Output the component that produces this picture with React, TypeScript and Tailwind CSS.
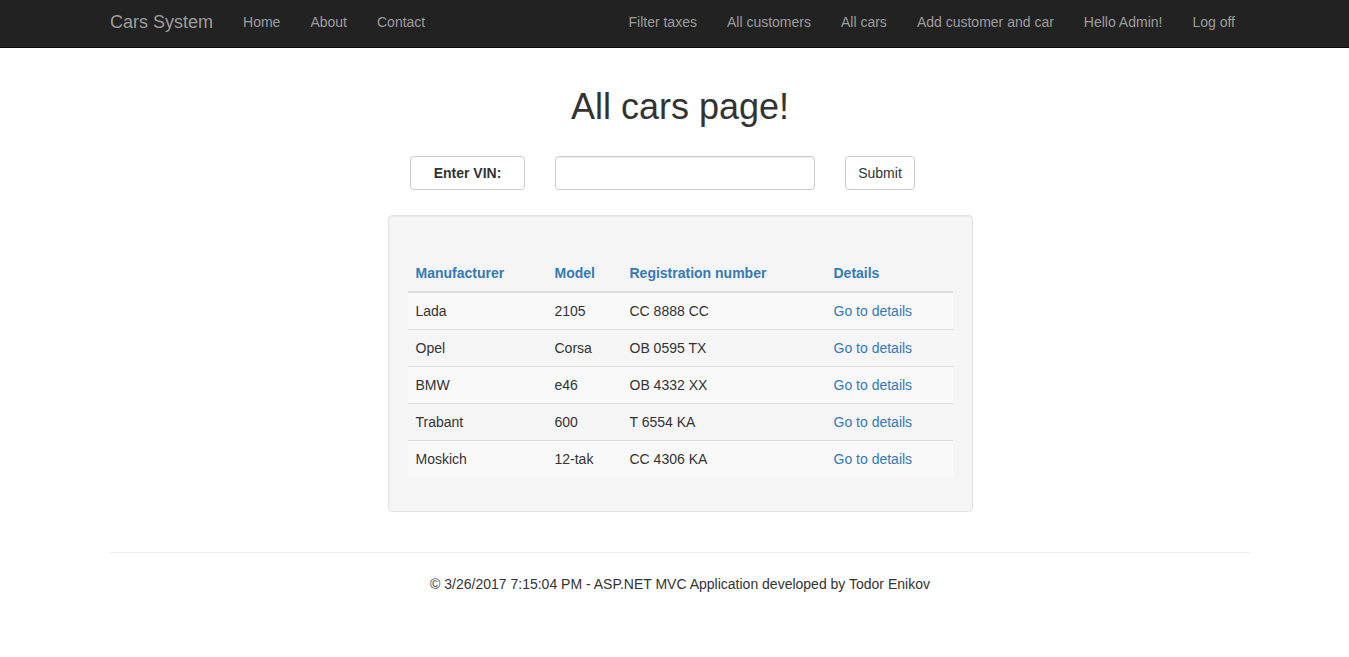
import React from "react";

const rows = [
  ["Lada", "2105", "CC 8888 CC"],
  ["Opel", "Corsa", "OB 0595 TX"],
  ["BMW", "e46", "OB 4332 XX"],
  ["Trabant", "600", "T 6554 KA"],
  ["Moskich", "12-tak", "CC 4306 KA"],
];

export default function App() {
  return (
    <div
      className="min-h-[657px] bg-white text-[14px] leading-[20px] text-[#333]"
      style={{ fontFamily: '"Liberation Sans", Arial, Helvetica, sans-serif' }}
    >
      <nav className="h-[48px] bg-[#222] border-b border-[#080808] pl-[11px]">
        <div className="w-[1140px] mx-auto h-[47px] pb-[4px] flex items-center justify-between text-[#9d9d9d]">
          <div className="flex items-center">
            <span className="text-[18px] leading-[20px] pr-[15px]">Cars System</span>
            <a className="px-[15px]">Home</a>
            <a className="px-[15px]">About</a>
            <a className="px-[15px]">Contact</a>
          </div>
          <div className="flex items-center">
            <a className="px-[15px]">Filter taxes</a>
            <a className="px-[15px]">All customers</a>
            <a className="px-[15px]">All cars</a>
            <a className="px-[15px]">Add customer and car</a>
            <a className="px-[15px]">Hello Admin!</a>
            <a className="px-[15px]">Log off</a>
          </div>
        </div>
      </nav>

      <div className="pl-[11px]">
        <div className="w-[1140px] mx-auto">
          <h1 className="mt-[39px] text-[36px] leading-[40px] text-center text-[#333] font-normal">
            All cars page!
          </h1>

          <div className="mt-[29px] flex items-center pl-[300px] gap-[30px]">
            <div className="w-[115px] h-[34px] border border-[#ccc] rounded-[4px] flex items-center justify-center font-bold">
              Enter VIN:
            </div>
            <input
              className="w-[260px] h-[34px] border border-[#ccc] rounded-[4px] px-3 shadow-[inset_0_1px_1px_rgba(0,0,0,0.075)] outline-none"
              type="text"
            />
            <button className="w-[70px] h-[34px] border border-[#ccc] rounded-[4px] bg-white text-[#333]">
              Submit
            </button>
          </div>

          <div className="mt-[25px] mx-auto w-[585px] bg-[#f5f5f5] border border-[#e3e3e3] rounded-[4px] px-[19px] pt-[39px] pb-[34px] shadow-[inset_0_1px_1px_rgba(0,0,0,0.05)]">
            <table className="w-full border-collapse">
              <thead>
                <tr className="border-b-2 border-[#ddd] text-[#337ab7] font-bold text-left">
                  <th className="w-[139px] px-[8px] py-[8px] text-left">Manufacturer</th>
                  <th className="w-[75px] px-[8px] py-[8px] text-left">Model</th>
                  <th className="w-[204px] px-[8px] py-[8px] text-left">Registration number</th>
                  <th className="px-[8px] py-[8px] text-left">Details</th>
                </tr>
              </thead>
              <tbody>
                {rows.map((r, i) => (
                  <tr
                    key={i}
                    className={
                      (i % 2 === 0 ? "bg-[#f9f9f9] " : "") +
                      (i > 0 ? "border-t border-[#ddd]" : "")
                    }
                  >
                    <td className="px-[8px] py-[8px]">{r[0]}</td>
                    <td className="px-[8px] py-[8px]">{r[1]}</td>
                    <td className="px-[8px] py-[8px]">{r[2]}</td>
                    <td className="px-[8px] py-[8px] text-[#337ab7]">Go to details</td>
                  </tr>
                ))}
              </tbody>
            </table>
          </div>

          <hr className="mt-[40px] border-t border-[#eee]" />
          <footer className="mt-[21px] text-center">
            © 3/26/2017 7:15:04 PM - ASP.NET MVC Application developed by Todor Enikov
          </footer>
        </div>
      </div>
    </div>
  );
}
